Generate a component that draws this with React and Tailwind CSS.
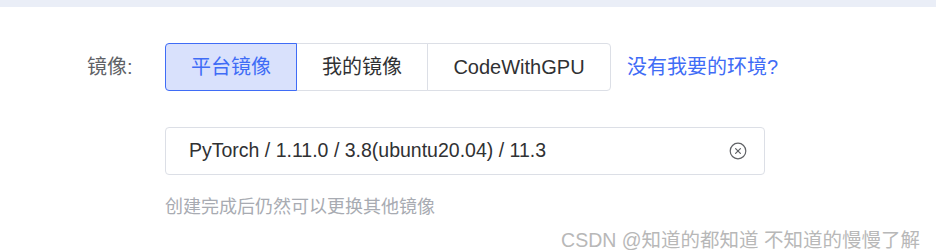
import React from "react";

const font = { fontFamily: '"Liberation Sans", "Noto Sans CJK SC", sans-serif' };

function ClearIcon() {
  return (
    <svg width="18" height="18" viewBox="0 0 18 18" fill="none">
      <circle cx="9" cy="9" r="7.8" stroke="#606266" strokeWidth="1.2" />
      <path d="M6.6 6.6 L11.4 11.4 M11.4 6.6 L6.6 11.4" stroke="#606266" strokeWidth="1.2" strokeLinecap="round" />
    </svg>
  );
}

export default function App() {
  const tabs = [
    { name: "平台镜像", w: "w-[132px]", active: true },
    { name: "我的镜像", w: "w-[132px]" },
    { name: "CodeWithGPU", w: "w-[184px]" },
  ];
  return (
    <div className="relative w-[936px] h-[250px] bg-white overflow-hidden" style={font}>
      <div className="h-[7px] bg-[#eaeef7]" />
      <div className="pt-[36px] pl-[87px]">
        <div className="flex items-center">
          <div className="w-[78px] text-[20px] text-[#606266]">镜像:</div>
          <div className="flex">
            {tabs.map((t, i) => (
              <div
                key={t.name}
                className={
                  "h-[48px] flex items-center justify-center text-[20px] border " +
                  t.w +
                  (i === 0 ? " rounded-l-[4px]" : " -ml-px") +
                  (i === tabs.length - 1 ? " rounded-r-[4px]" : "") +
                  (t.active
                    ? " bg-[#d9e1fc] border-[#3f6cf6] text-[#3f6cf6] relative z-10"
                    : " bg-white border-[#dcdfe6] text-[#303133]")
                }
              >
                {t.name}
              </div>
            ))}
          </div>
          <a className="ml-[16px] text-[20px] text-[#3f6cf6]">没有我要的环境?</a>
        </div>
        <div className="ml-[78px] mt-[36px] w-[600px] h-[48px] border border-[#dcdfe6] rounded-[4px] flex items-center pl-[23px] pr-[17px]">
          <span className="flex-1 text-[19.5px] text-[#303133]">PyTorch / 1.11.0 / 3.8(ubuntu20.04) / 11.3</span>
          <ClearIcon />
        </div>
        <div className="ml-[78px] mt-[19px] text-[18px] text-[#a8abb2]">创建完成后仍然可以更换其他镜像</div>
      </div>
      <div className="absolute right-[16px] bottom-[-3px] text-[19.5px] text-[#b8b8b8] leading-[26px]">
        CSDN @知道的都知道 不知道的慢慢了解
      </div>
    </div>
  );
}
